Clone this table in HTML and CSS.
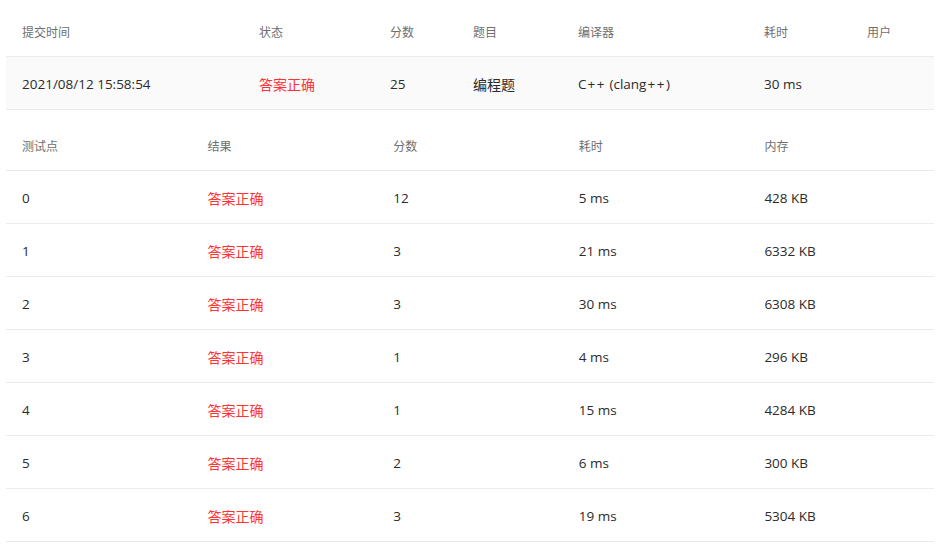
FILE: index.html
```html
<!DOCTYPE html>
<html lang="zh-CN">
<head>
<meta charset="utf-8">
<link rel="stylesheet" href="styles.css">
</head>
<body>
<div class="page">
  <div class="summary">
    <div class="row head s-cols">
      <div class="cell">提交时间</div>
      <div class="cell">状态</div>
      <div class="cell">分数</div>
      <div class="cell">题目</div>
      <div class="cell">编译器</div>
      <div class="cell">耗时</div>
      <div class="cell">用户</div>
    </div>
    <div class="row data s-cols shaded">
      <div class="cell">2021/08/12 15:58:54</div>
      <div class="cell ok">答案正确</div>
      <div class="cell">25</div>
      <div class="cell zh">编程题</div>
      <div class="cell">C<span class="plus">++</span> (clang<span class="plus">++</span>)</div>
      <div class="cell">30 ms</div>
      <div class="cell"></div>
    </div>
  </div>
  <div class="cases">
    <div class="row head c-cols">
      <div class="cell">测试点</div>
      <div class="cell">结果</div>
      <div class="cell">分数</div>
      <div class="cell">耗时</div>
      <div class="cell">内存</div>
    </div>
    <div class="row data c-cols"><div class="cell">0</div><div class="cell ok">答案正确</div><div class="cell">12</div><div class="cell">5 ms</div><div class="cell">428 KB</div></div>
    <div class="row data c-cols"><div class="cell">1</div><div class="cell ok">答案正确</div><div class="cell">3</div><div class="cell">21 ms</div><div class="cell">6332 KB</div></div>
    <div class="row data c-cols"><div class="cell">2</div><div class="cell ok">答案正确</div><div class="cell">3</div><div class="cell">30 ms</div><div class="cell">6308 KB</div></div>
    <div class="row data c-cols"><div class="cell">3</div><div class="cell ok">答案正确</div><div class="cell">1</div><div class="cell">4 ms</div><div class="cell">296 KB</div></div>
    <div class="row data c-cols"><div class="cell">4</div><div class="cell ok">答案正确</div><div class="cell">1</div><div class="cell">15 ms</div><div class="cell">4284 KB</div></div>
    <div class="row data c-cols"><div class="cell">5</div><div class="cell ok">答案正确</div><div class="cell">2</div><div class="cell">6 ms</div><div class="cell">300 KB</div></div>
    <div class="row data c-cols"><div class="cell">6</div><div class="cell ok">答案正确</div><div class="cell">3</div><div class="cell">19 ms</div><div class="cell">5304 KB</div></div>
  </div>
</div>
</body>
</html>
```
FILE: styles.css
```css
html, body {
  margin: 0;
  padding: 0;
  background: #ffffff;
}
body {
  font-family: "Open Sans", "Noto Sans CJK SC", sans-serif;
  color: #333333;
}
.page {
  padding: 8px 11px 0 6px;
}
.row {
  display: grid;
  align-items: center;
  border-bottom: 1px solid #ebebeb;
}
.s-cols {
  grid-template-columns: 237px 131px 83px 105px 186px 103px 83px;
}
.c-cols {
  grid-template-columns: repeat(5, 1fr);
}
.cell {
  padding-left: 16px;
  white-space: nowrap;
}
.head .cell {
  font-size: 12px;
  color: #6f6f6f;
}
.data .cell {
  font-size: 13.5px;
  color: #2b2b2b;
  padding-top: 2px;
}
.data .cell.ok,
.data .cell.zh {
  font-size: 14px;
}
.plus {
  letter-spacing: 1.5px;
  padding-left: 1px;
}
.summary .head {
  height: 48px;
}
.summary .data {
  height: 52px;
}
.shaded {
  background: #fafafa;
}
.cases .head {
  height: 48px;
  margin-top: 12px;
}
.cases .data {
  height: 52px;
}
.data .cell.ok {
  color: #ff3333;
}
```
